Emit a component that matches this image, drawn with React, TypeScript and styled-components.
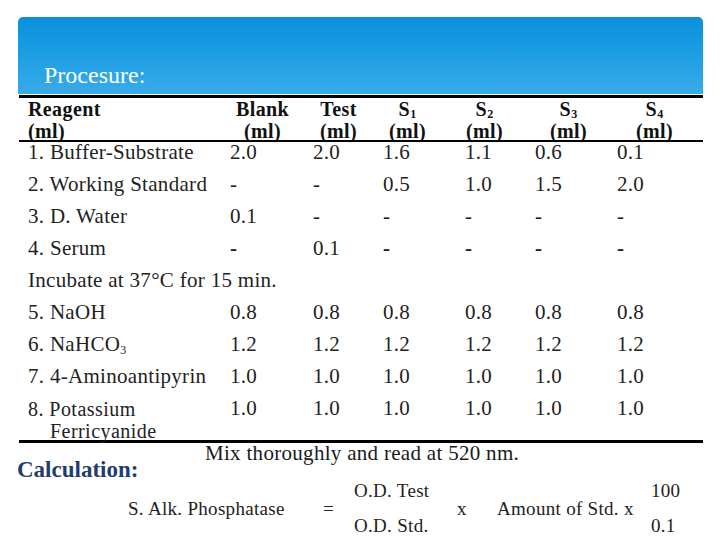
import React from 'react'
import styled, { createGlobalStyle } from 'styled-components'

const GlobalStyle = createGlobalStyle`
  html, body {
    margin: 0;
    padding: 0;
    background: #fff;
  }
  body {
    font-family: "Liberation Serif", "Times New Roman", serif;
    color: #1a1a1a;
  }
`

const Slide = styled.div`
  width: 720px;
  height: 540px;
  box-sizing: border-box;
  padding: 17px 17px 0 18px;
  overflow: hidden;
  display: flex;
  flex-direction: column;
`

const TitleBar = styled.div`
  height: 77px;
  border-radius: 5px 5px 0 0;
  background: linear-gradient(180deg, #0a90db 0%, #1a9de2 45%, #3aabe8 100%);
  display: flex;
  align-items: flex-end;
  padding: 0 0 7px 26px;
  box-sizing: border-box;
`

const Title = styled.h1`
  margin: 0;
  font-weight: normal;
  font-size: 24px;
  line-height: 24px;
  color: #fff;
`

const Table = styled.div`
  margin: 1px 0 0 1px;
  border-top: 3px solid #000;
  border-bottom: 3px solid #000;
  padding-left: 9px;
  display: grid;
  grid-template-columns: 202px 83px 70px 82px 70px 82px auto;
  font-size: 21px;
  line-height: 21px;
  letter-spacing: 0.3px;
`

const Row = styled.div`
  display: contents;
`

const HeadCell = styled.div<{ $offset: number; $left?: boolean }>`
  display: flex;
  flex-direction: column;
  align-items: ${({ $left }) => ($left ? 'flex-start' : 'center')};
  width: fit-content;
  height: 42px;
  margin-left: ${({ $offset }) => $offset}px;
  font-size: 20px;
  line-height: 22px;
  letter-spacing: 0.4px;
  font-weight: bold;
  color: #111;
  sub {
    font-size: 12px;
    line-height: 0;
    vertical-align: -2px;
  }
`

const HeadRule = styled.div`
  grid-column: 1 / -1;
  height: 2px;
  background: #000;
  margin-left: -9px;
`

const Cell = styled.div<{ $bold?: boolean }>`
  height: 32px;
  color: #222;
  font-weight: ${({ $bold }) => ($bold ? 'bold' : 'normal')};
  white-space: nowrap;
  sub {
    font-size: 12px;
    line-height: 0;
    vertical-align: -3px;
  }
`

const TallCell = styled(Cell)`
  height: 42px;
`

const TwoLine = styled.span`
  display: block;
  font-size: 20px;
  line-height: 22px;
  letter-spacing: 0.45px;
`

const Indent = styled.span`
  display: block;
  padding-left: 22px;
`

const NoteCell = styled.div`
  grid-column: 1 / -1;
  height: 32px;
  color: #222;
`

const Footer = styled.div`
  display: flex;
  align-items: flex-start;
`

const Heading = styled.h2`
  margin: 0 0 0 -1px;
  width: 188px;
  padding-top: 16px;
  font-size: 23px;
  line-height: 22px;
  font-weight: bold;
  color: #1f3c6e;
`

const Note = styled.div`
  font-size: 21px;
  line-height: 21px;
  letter-spacing: 0.3px;
  color: #1a1a1a;
`

const Formula = styled.div`
  display: grid;
  grid-template-columns: 195px 31px 103px 40px 154px auto;
  align-items: center;
  padding-left: 110px;
  font-size: 19px;
  line-height: 20px;
  letter-spacing: 0.3px;
  color: #222;
`

const Fraction = styled.div`
  display: flex;
  flex-direction: column;
  gap: 15px;
`

const rows: { name: React.ReactNode; vals: string[]; bold?: boolean }[] = [
  { name: '1. Buffer-Substrate', vals: ['2.0', '2.0', '1.6', '1.1', '0.6', '0.1'] },
  { name: '2. Working Standard', vals: ['-', '-', '0.5', '1.0', '1.5', '2.0'] },
  { name: '3. D. Water', vals: ['0.1', '-', '-', '-', '-', '-'] },
  { name: '4. Serum', vals: ['-', '0.1', '-', '-', '-', '-'], bold: true },
]

const rows2: { name: React.ReactNode; vals: string[] }[] = [
  { name: '5. NaOH', vals: ['0.8', '0.8', '0.8', '0.8', '0.8', '0.8'] },
  {
    name: (
      <>
        6. NaHCO<sub>3</sub>
      </>
    ),
    vals: ['1.2', '1.2', '1.2', '1.2', '1.2', '1.2'],
  },
  { name: '7. 4-Aminoantipyrin', vals: ['1.0', '1.0', '1.0', '1.0', '1.0', '1.0'] },
]

const heads: { label: React.ReactNode; offset: number }[] = [
  { label: 'Blank', offset: 6 },
  { label: 'Test', offset: 7 },
  { label: <>S<sub>1</sub></>, offset: 6 },
  { label: <>S<sub>2</sub></>, offset: 1 },
  { label: <>S<sub>3</sub></>, offset: 15 },
  { label: <>S<sub>4</sub></>, offset: 19 },
]

export default function App() {
  return (
    <>
      <GlobalStyle />
      <Slide>
        <TitleBar>
          <Title>Procesure:</Title>
        </TitleBar>

        <Table>
          <Row>
            <HeadCell $offset={0} $left>
              <span>Reagent</span>
              <span>(ml)</span>
            </HeadCell>
            {heads.map((h, i) => (
              <HeadCell key={i} $offset={h.offset}>
                <span>{h.label}</span>
                <span>(ml)</span>
              </HeadCell>
            ))}
          </Row>
          <HeadRule />

          {rows.map((r, i) => (
            <Row key={i}>
              <Cell>{r.name}</Cell>
              {r.vals.map((v, j) => (
                <Cell key={j} $bold={r.bold && v === '-'}>
                  {v}
                </Cell>
              ))}
            </Row>
          ))}

          <NoteCell>Incubate at 37°C for 15 min.</NoteCell>

          {rows2.map((r, i) => (
            <Row key={i}>
              <Cell>{r.name}</Cell>
              {r.vals.map((v, j) => (
                <Cell key={j}>{v}</Cell>
              ))}
            </Row>
          ))}

          <TallCell>
            <TwoLine>
              8. Potassium
              <Indent>Ferricyanide</Indent>
            </TwoLine>
          </TallCell>
          {['1.0', '1.0', '1.0', '1.0', '1.0', '1.0'].map((v, j) => (
            <TallCell key={j}>{v}</TallCell>
          ))}
        </Table>

        <Footer>
          <Heading>Calculation:</Heading>
          <Note>Mix thoroughly and read at 520 nm.</Note>
        </Footer>

        <Formula>
          <span>S. Alk. Phosphatase</span>
          <span>=</span>
          <Fraction>
            <span>O.D. Test</span>
            <span>O.D. Std.</span>
          </Fraction>
          <span>x</span>
          <span>Amount of Std. x</span>
          <Fraction>
            <span>100</span>
            <span>0.1</span>
          </Fraction>
        </Formula>
      </Slide>
    </>
  )
}
